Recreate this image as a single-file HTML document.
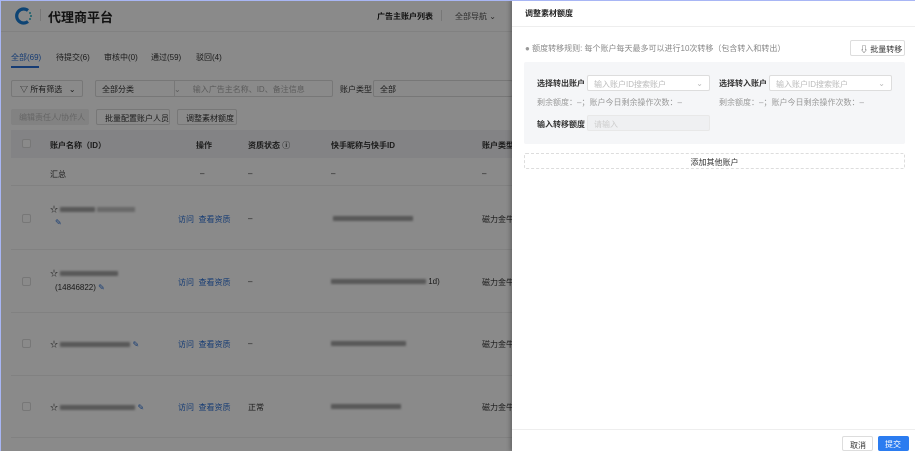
<!DOCTYPE html>
<html><head><meta charset="utf-8">
<style>
*{box-sizing:border-box;margin:0;padding:0}
body{width:915px;height:451px;overflow:hidden;position:relative;background:#fff;font-family:"Liberation Sans","Noto Sans CJK SC",sans-serif;font-size:8px;color:#333}
.a{position:absolute;white-space:nowrap}
.bd{border:1px solid #ddd;border-radius:2px;background:#fff}
.blue{color:#2a6fd6}
.line{position:absolute;left:11px;width:502px;height:1px;background:#eee}
.ov{position:absolute;left:0;top:0;width:915px;height:451px;background:rgba(0,0,0,0.46)}
.drawer{position:absolute;left:512px;top:0;width:403px;height:451px;background:#fff;box-shadow:-2px 0 4px rgba(0,0,0,.25)}
.blur{display:inline-block;height:5px;background:#666;opacity:.6;vertical-align:middle;filter:blur(1px)}
</style></head><body>
<!-- main page -->
<div class="a" style="left:0;top:0;width:1px;height:451px;background:#a8b6f5;z-index:5"></div>
<div class="a" style="left:0;top:0;width:915px;height:1px;background:#a8b6f5;z-index:5"></div>
<svg class="a" style="left:14px;top:6px" width="20" height="20" viewBox="0 0 20 20"><path d="M14 4.5A7 7 0 1 0 14 15.5" fill="none" stroke="#1a7fd6" stroke-width="3.2"/><circle cx="16" cy="7" r="1" fill="#2ab0c8"/><circle cx="17" cy="10" r="1" fill="#2ab0c8"/><circle cx="16" cy="13" r="1" fill="#2ab0c8"/></svg>
<div class="a" style="left:40px;top:9px;width:1px;height:12px;background:#ddd"></div>
<div class="a" style="left:48px;top:7px;font-size:13px;font-weight:bold;color:#222">代理商平台</div>
<div class="a" style="left:377px;top:11px;font-weight:bold;color:#222">广告主账户列表</div>
<div class="a" style="left:441px;top:10px;width:1px;height:11px;background:#ddd"></div>
<div class="a" style="left:455px;top:11px;color:#555">全部导航 ⌄</div>
<div class="a" style="left:0;top:31px;width:513px;height:1px;background:#eee"></div>
<div class="a blue" style="left:11px;top:52px">全部(69)</div>
<div class="a" style="left:11px;top:66px;width:28px;height:2px;background:#2a6fd6"></div>
<div class="a" style="left:56px;top:52px">待提交(6)</div>
<div class="a" style="left:104px;top:52px">审核中(0)</div>
<div class="a" style="left:151px;top:52px">通过(59)</div>
<div class="a" style="left:196px;top:52px">驳回(4)</div>
<div class="a bd" style="left:11px;top:80px;width:72px;height:17px;padding:3px 0 0 8px">▽ 所有筛选 &nbsp;&nbsp;⌄</div>
<div class="a bd" style="left:95px;top:80px;width:238px;height:17px;padding:3px 0 0 6px">全部分类<span style="color:#aaa;margin-left:40px">⌄</span><span style="color:#aaa;margin-left:12px">输入广告主名称、ID、备注信息</span></div>
<div class="a" style="left:174px;top:80px;width:1px;height:17px;background:#ddd"></div>
<div class="a" style="left:340px;top:84px">账户类型</div>
<div class="a bd" style="left:373px;top:80px;width:140px;height:17px;padding:3px 0 0 6px">全部</div>
<div class="a" style="left:11px;top:109px;width:78px;height:16px;background:#f0f0f0;color:#bbb;padding:3px 0 0 8px;border-radius:2px">编辑责任人/协作人</div>
<div class="a bd" style="left:96px;top:109px;width:74px;height:16px;padding:3px 0 0 8px">批量配置账户人员</div>
<div class="a bd" style="left:177px;top:109px;width:60px;height:16px;padding:3px 0 0 8px">调整素材额度</div>
<div class="a" style="left:11px;top:130px;width:502px;height:28px;background:#f2f3f5"></div>
<div class="a bd" style="left:22px;top:139px;width:9px;height:9px"></div>
<div class="a" style="left:50px;top:140px;font-weight:bold">账户名称（ID）</div>
<div class="a" style="left:196px;top:140px;font-weight:bold">操作</div>
<div class="a" style="left:248px;top:140px;font-weight:bold">资质状态 ⓘ</div>
<div class="a" style="left:331px;top:140px;font-weight:bold">快手昵称与快手ID</div>
<div class="a" style="left:482px;top:140px;font-weight:bold">账户类型</div>
<div class="a" style="left:50px;top:169px">汇总</div>
<div class="a" style="left:200px;top:169px">–</div><div class="a" style="left:248px;top:169px">–</div><div class="a" style="left:331px;top:169px">–</div><div class="a" style="left:482px;top:169px">–</div>
<div class="line" style="top:185px"></div>
<!-- rows -->
<div class="a bd" style="left:22px;top:214px;width:9px;height:9px"></div>
<div class="a" style="left:50px;top:204px">☆ <span class="blur" style="width:35px"></span> <span class="blur" style="width:38px;opacity:.4"></span></div>
<div class="a blue" style="left:55px;top:218px">✎</div>
<div class="a blue" style="left:178px;top:214px">访问 &nbsp;查看资质</div>
<div class="a" style="left:248px;top:214px">–</div>
<div class="a" style="left:333px;top:214px"><span class="blur" style="width:80px"></span></div>
<div class="a" style="left:482px;top:214px">磁力金牛</div>
<div class="line" style="top:249px"></div>
<div class="a bd" style="left:22px;top:277px;width:9px;height:9px"></div>
<div class="a" style="left:50px;top:268px">☆ <span class="blur" style="width:58px"></span></div>
<div class="a" style="left:55px;top:283px">(14846822) <span class="blue">✎</span></div>
<div class="a blue" style="left:178px;top:277px">访问 &nbsp;查看资质</div>
<div class="a" style="left:248px;top:277px">–</div>
<div class="a" style="left:331px;top:277px"><span class="blur" style="width:95px"></span> 1d)</div>
<div class="a" style="left:482px;top:277px">磁力金牛</div>
<div class="line" style="top:312px"></div>
<div class="a bd" style="left:22px;top:339px;width:9px;height:9px"></div>
<div class="a" style="left:50px;top:339px">☆ <span class="blur" style="width:70px"></span> <span class="blue">✎</span></div>
<div class="a blue" style="left:178px;top:339px">访问 &nbsp;查看资质</div>
<div class="a" style="left:248px;top:339px">–</div>
<div class="a" style="left:331px;top:339px"><span class="blur" style="width:75px"></span></div>
<div class="a" style="left:482px;top:339px">磁力金牛</div>
<div class="line" style="top:375px"></div>
<div class="a bd" style="left:22px;top:402px;width:9px;height:9px"></div>
<div class="a" style="left:50px;top:402px">☆ <span class="blur" style="width:75px"></span> <span class="blue">✎</span></div>
<div class="a blue" style="left:178px;top:402px">访问 &nbsp;查看资质</div>
<div class="a" style="left:248px;top:402px">正常</div>
<div class="a" style="left:331px;top:402px"><span class="blur" style="width:70px"></span></div>
<div class="a" style="left:482px;top:402px">磁力金牛</div>
<div class="line" style="top:437px"></div>
<div class="ov"></div>
<!-- drawer -->
<div class="drawer">
<div class="a" style="left:13px;top:8px;font-weight:bold;color:#222">调整素材额度</div>
<div class="a" style="left:0;top:26px;width:403px;height:1px;background:#eee"></div>
<div class="a" style="left:13px;top:43px;color:#888"><span style="color:#999">●</span> 额度转移规则: 每个账户每天最多可以进行10次转移（包含转入和转出）</div>
<div class="a bd" style="left:338px;top:40px;width:55px;height:16px;padding:3px 0 0 9px;color:#333">⇩ 批量转移</div>
<div class="a" style="left:12px;top:62px;width:381px;height:82px;background:#f5f6f8;border-radius:2px"></div>
<div class="a" style="left:25px;top:78px;font-weight:bold">选择转出账户</div>
<div class="a bd" style="left:75px;top:75px;width:123px;height:16px;padding:3px 0 0 6px;color:#bbb">输入账户ID搜索账户<span style="position:absolute;right:6px">⌄</span></div>
<div class="a" style="left:207px;top:78px;font-weight:bold">选择转入账户</div>
<div class="a bd" style="left:257px;top:75px;width:123px;height:16px;padding:3px 0 0 6px;color:#bbb">输入账户ID搜索账户<span style="position:absolute;right:6px">⌄</span></div>
<div class="a" style="left:25px;top:97px;color:#999">剩余额度：–；账户今日剩余操作次数：–</div>
<div class="a" style="left:207px;top:97px;color:#999">剩余额度：–；账户今日剩余操作次数：–</div>
<div class="a" style="left:25px;top:119px;font-weight:bold">输入转移额度</div>
<div class="a" style="left:75px;top:115px;width:123px;height:16px;padding:3px 0 0 6px;color:#ccc;background:#eff0f2;border:1px solid #e8e8e8;border-radius:2px">请输入</div>
<div class="a" style="left:12px;top:153px;width:381px;height:16px;border:1px dashed #ddd;border-radius:2px;text-align:center;padding-top:3px">添加其他账户</div>
<div class="a" style="left:0;top:429px;width:403px;height:1px;background:#eee"></div>
<div class="a bd" style="left:330px;top:436px;width:31px;height:15px;padding:3px 0 0 7px">取消</div>
<div class="a" style="left:366px;top:436px;width:31px;height:15px;padding:3px 0 0 7px;background:#2b7cf0;color:#fff;border-radius:2px">提交</div>
</div>
</body></html>
